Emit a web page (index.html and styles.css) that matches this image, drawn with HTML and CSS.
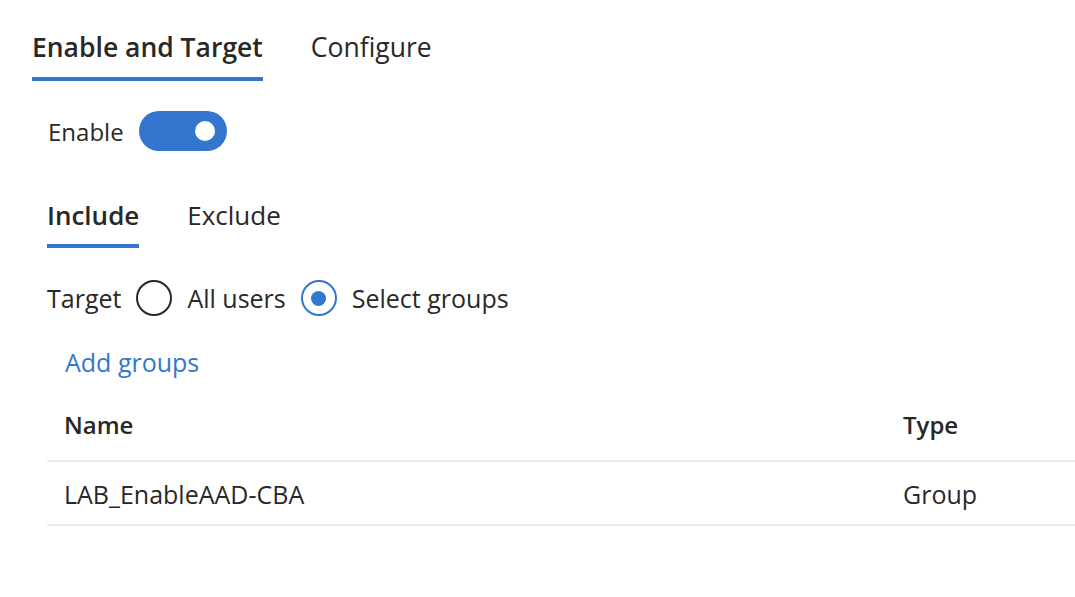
FILE: index.html
```html
<!DOCTYPE html>
<html lang="en">
<head>
  <meta charset="UTF-8" />
  <title>Enable and Target</title>
  <link rel="stylesheet" href="styles.css">
</head>
<body>
  <div class="page">
    <div class="tabs">
      <span class="tab active">Enable and Target</span>
      <span class="tab">Configure</span>
    </div>

    <div class="enable-row">
      <span>Enable</span>
      <span class="toggle"><span class="knob"></span></span>
    </div>

    <div class="subtabs">
      <span class="subtab active">Include</span>
      <span class="subtab">Exclude</span>
    </div>

    <div class="target-row">
      <span>Target</span>
      <span class="radio"></span>
      <span>All users</span>
      <span class="radio checked"></span>
      <span>Select groups</span>
    </div>

    <a class="add-link" href="#">Add groups</a>

    <table class="groups">
      <thead>
        <tr>
          <th class="col-name">Name</th>
          <th>Type</th>
        </tr>
      </thead>
      <tbody>
        <tr>
          <td class="col-name">LAB_EnableAAD-CBA</td>
          <td>Group</td>
        </tr>
      </tbody>
    </table>
  </div>
</body>
</html>
```

FILE: styles.css
```css
body {
  font-family: "Open Sans", Arial, sans-serif;
  color: #292827;
  background-color: #ffffff;
  margin: 0;
  padding: 0;
}

.page {
  padding: 25px 0 0 32px;
}

.tabs {
  display: flex;
  gap: 48px;
  font-size: 26.5px;
}

.tab {
  line-height: 44px;
  padding-bottom: 8px;
  border-bottom: 4px solid transparent;
}

.tab.active {
  font-weight: 600;
  border-bottom-color: #3277cd;
}

.enable-row {
  display: flex;
  align-items: center;
  gap: 15px;
  margin: 30px 0 0 16px;
  font-size: 24px;
}

.toggle {
  width: 88px;
  height: 40px;
  border-radius: 20px;
  background-color: #3277cd;
  position: relative;
}

.knob {
  position: absolute;
  right: 12px;
  top: 10px;
  width: 20px;
  height: 20px;
  border-radius: 50%;
  background-color: #ffffff;
}

.subtabs {
  display: flex;
  gap: 48px;
  margin: 44px 0 0 15px;
  font-size: 26px;
}

.subtab {
  line-height: 40px;
  padding-bottom: 9px;
  border-bottom: 4px solid transparent;
}

.subtab.active {
  font-weight: 600;
  border-bottom-color: #3277cd;
}

.target-row {
  display: flex;
  align-items: center;
  gap: 15px;
  margin: 32px 0 0 15px;
  font-size: 25px;
  height: 36px;
}

.radio {
  width: 32px;
  height: 32px;
  border: 2px solid #292827;
  border-radius: 50%;
  display: flex;
  align-items: center;
  justify-content: center;
}

.radio.checked {
  border-color: #3277cd;
}

.radio.checked::after {
  content: "";
  width: 15px;
  height: 15px;
  border-radius: 50%;
  background-color: #3277cd;
}

.add-link {
  display: inline-block;
  margin: 29px 0 0 33px;
  font-size: 25px;
  line-height: 34px;
  color: #3277cd;
  text-decoration: none;
}

.groups {
  width: calc(100% - 15px);
  margin: 10px 0 0 15px;
  border-collapse: collapse;
  font-size: 25px;
  line-height: 34px;
}

.groups th {
  text-align: left;
  font-weight: 600;
  font-size: 24px;
  padding: 19px 0 18px 0;
  border-bottom: 2px solid #ebebeb;
}

.groups td {
  padding: 15px 0 13px 0;
  border-bottom: 2px solid #ebebeb;
}

.groups .col-name {
  padding-left: 17px;
  width: 839px;
}
```
